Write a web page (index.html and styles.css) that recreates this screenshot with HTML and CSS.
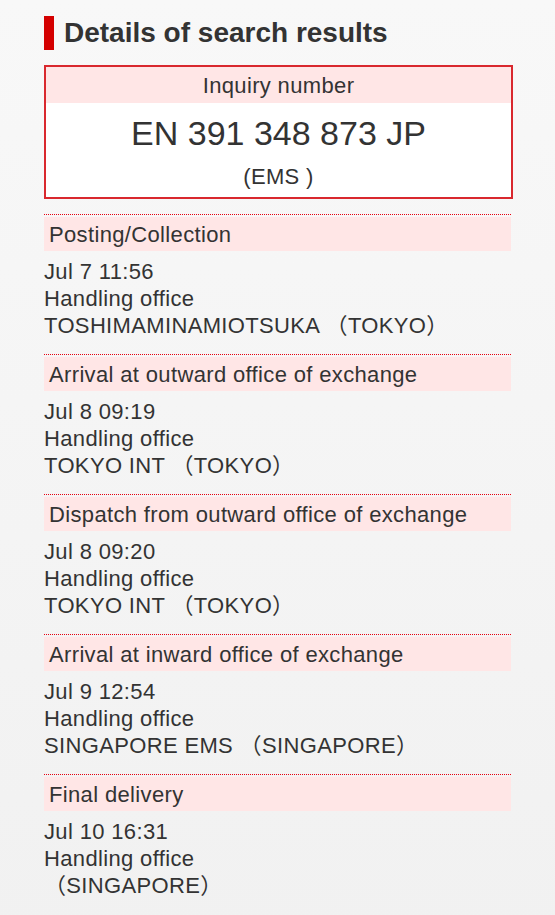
FILE: index.html
```html
<!DOCTYPE html>
<html lang="en">

<head>
    <meta charset="UTF-8">
    <meta name="viewport" content="width=device-width, initial-scale=1.0">
    <title>Details of search results</title>
    <link rel="stylesheet" href="styles.css">
</head>

<body>
    <div class="page">
        <h2 class="heading"><span class="heading-bar"></span>Details of search results</h2>

        <div class="inquiry">
            <div class="inquiry-label">Inquiry number</div>
            <div class="inquiry-number">EN 391 348 873 JP</div>
            <div class="inquiry-type">(EMS )</div>
        </div>

        <div class="status">
            <div class="status-title">Posting/Collection</div>
            <div class="status-body">
                Jul 7 11:56<br>
                Handling office<br>
                TOSHIMAMINAMIOTSUKA （TOKYO）
            </div>
        </div>

        <div class="status">
            <div class="status-title">Arrival at outward office of exchange</div>
            <div class="status-body">
                Jul 8 09:19<br>
                Handling office<br>
                TOKYO INT （TOKYO）
            </div>
        </div>

        <div class="status">
            <div class="status-title">Dispatch from outward office of exchange</div>
            <div class="status-body">
                Jul 8 09:20<br>
                Handling office<br>
                TOKYO INT （TOKYO）
            </div>
        </div>

        <div class="status">
            <div class="status-title">Arrival at inward office of exchange</div>
            <div class="status-body">
                Jul 9 12:54<br>
                Handling office<br>
                SINGAPORE EMS （SINGAPORE）
            </div>
        </div>

        <div class="status">
            <div class="status-title">Final delivery</div>
            <div class="status-body">
                Jul 10 16:31<br>
                Handling office<br>
                （SINGAPORE）
            </div>
        </div>
    </div>
</body>

</html>
```

FILE: styles.css
```css
html {
    min-height: 100%;
    background: linear-gradient(#f8f8f8, #f1f1f1);
}

body {
    margin: 0;
    font-family: 'Liberation Sans', 'Noto Sans CJK JP', Arial, sans-serif;
    color: #333;
    font-size: 22px;
    letter-spacing: 0.35px;
}

.page {
    padding: 16px 0 20px 44px;
    width: 469px;
}

.heading {
    display: flex;
    align-items: center;
    margin: 0;
    height: 34px;
    font-size: 28px;
    font-weight: bold;
    letter-spacing: 0;
    color: #333;
}

.heading-bar {
    display: block;
    width: 10px;
    height: 34px;
    margin-right: 10px;
    background-color: #d40000;
}

.inquiry {
    margin-top: 15px;
    border: 2px solid #d9282e;
    background-color: #fff;
    text-align: center;
}

.inquiry-label {
    height: 34px;
    padding-top: 2px;
    line-height: 34px;
    background-color: #ffe6e6;
}

.inquiry-number {
    padding-top: 8px;
    line-height: 44px;
    font-size: 34px;
    letter-spacing: 0;
}

.inquiry-type {
    margin-top: 6px;
    padding-top: 1px;
    padding-bottom: 5px;
    line-height: 30px;
}

.status {
    width: 467px;
    border-top: 1px dotted #e8000f;
    padding-top: 2px;
}

.inquiry + .status {
    margin-top: 15px;
}

.status-title {
    height: 33px;
    padding: 1px 0 0 5px;
    line-height: 34px;
    background-color: #ffe6e6;
}

.status-body {
    padding: 7px 0 15px;
    line-height: 27px;
}
```
